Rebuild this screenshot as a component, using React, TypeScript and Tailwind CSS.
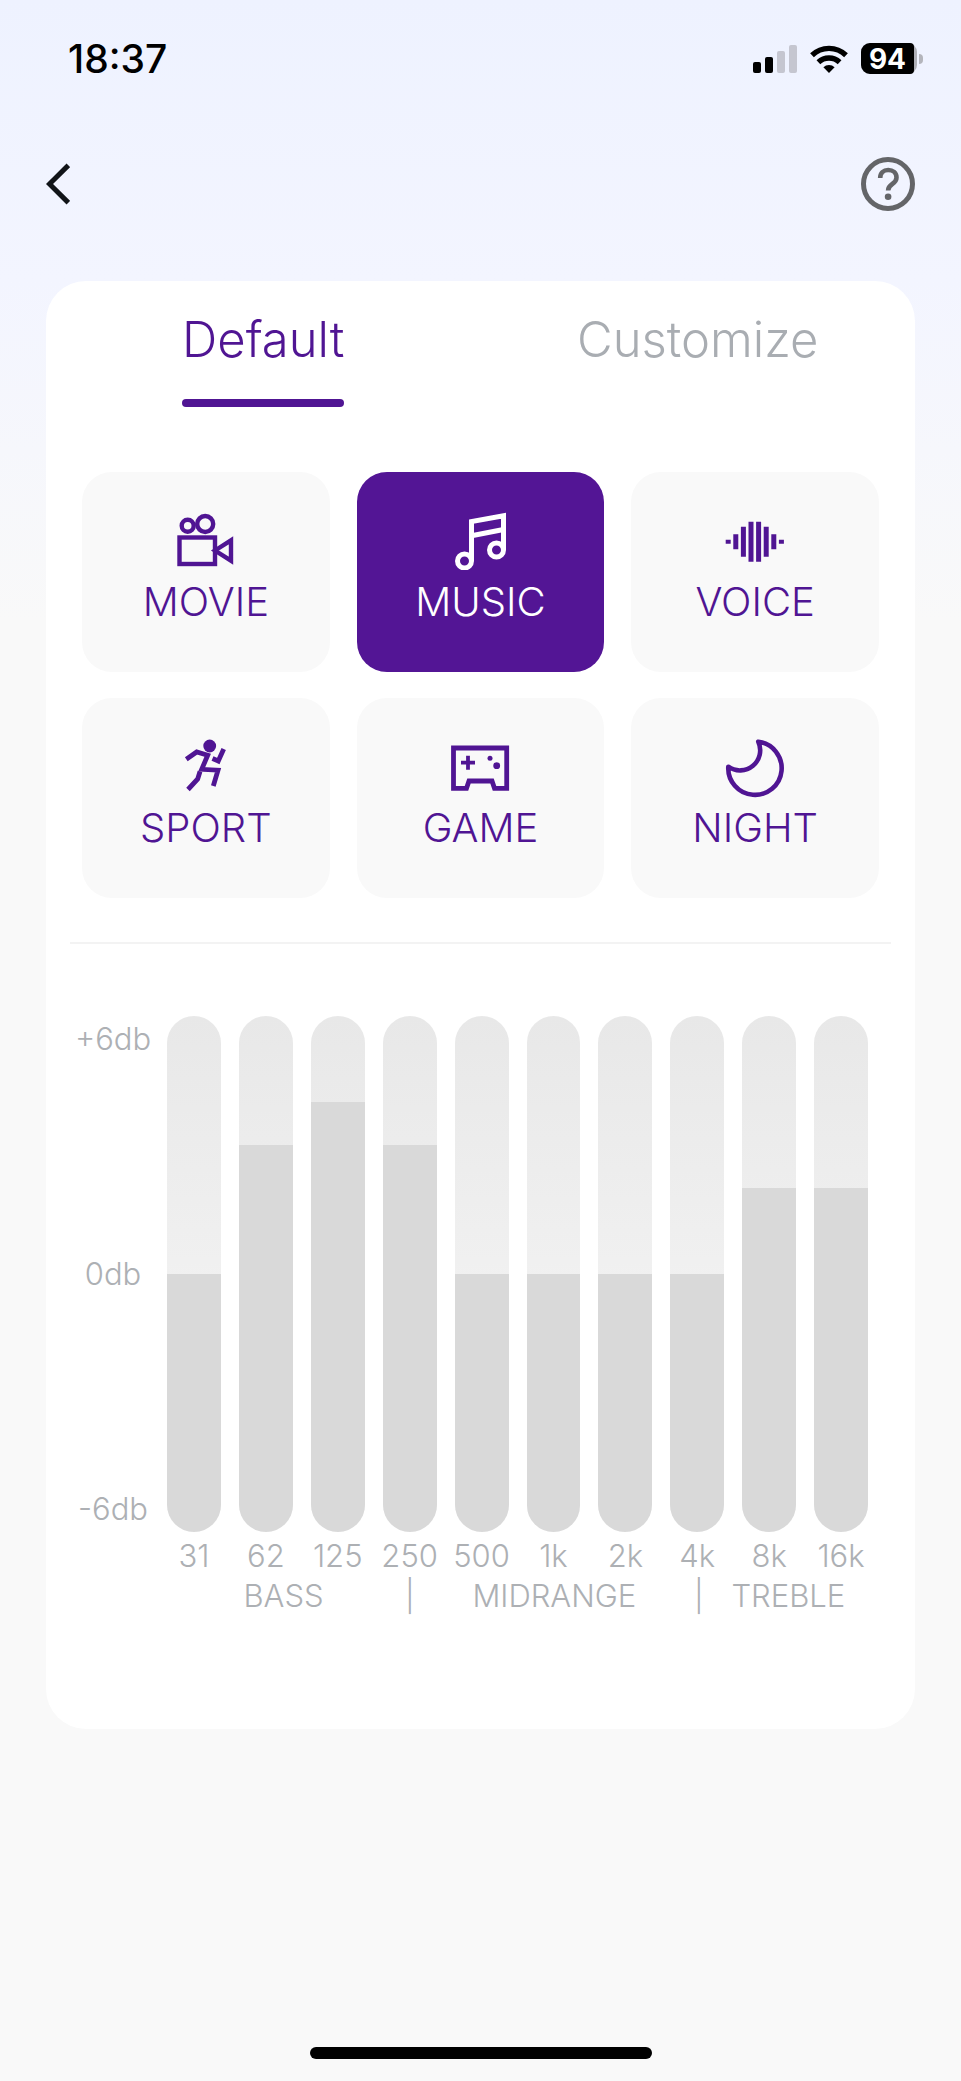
import { useState } from 'react';
import type { ReactNode } from 'react';

const BANDS = ['31', '62', '125', '250', '500', '1k', '2k', '4k', '8k', '16k'];

const MovieIcon = () => (
    <svg viewBox="0 0 60 60" className="w-[60px] h-[60px]" fill="none" stroke="currentColor" strokeWidth="4.4">
        <circle cx="11.7" cy="15.7" r="6" />
        <circle cx="29.2" cy="14" r="8" />
        <rect x="3.5" y="27.5" width="35.5" height="26.5" />
        <path d="M39 40.5 55 30.3v20.4z" />
    </svg>
);

const MusicIcon = () => (
    <svg viewBox="0 0 60 60" className="w-[60px] h-[60px]" fill="none" stroke="currentColor" strokeWidth="5">
        <circle cx="14.5" cy="51" r="7" />
        <circle cx="46.5" cy="40" r="7" />
        <path d="M21.5 51V11.5L53.5 5.7V40" />
        <path d="M21.5 25.7 53.5 19.5" />
    </svg>
);

const VoiceIcon = () => (
    <svg viewBox="0 0 60 60" className="w-[60px] h-[60px]" fill="none" stroke="currentColor" strokeWidth="5">
        <path d="M3.2 29.7v4M10.8 24.2v15M18.4 16.7v30M26 11.7v40M33.6 11.7v40M41.2 16.7v30M48.8 24.2v15M56.4 29.7v4" />
    </svg>
);

const SportIcon = () => (
    <svg viewBox="0 0 60 60" className="w-[60px] h-[60px]" fill="none" stroke="currentColor" strokeWidth="4.8">
        <circle cx="33.7" cy="10" r="6.4" fill="currentColor" stroke="none" />
        <path d="M10.3 23.3 20.7 16l11 3.3-6 14L42 34.2 37.3 50" />
        <path d="M24 35.5 21.7 43 12 53.5" />
        <path d="M36.5 22.5 42.3 25l5.4-12" />
    </svg>
);

const GameIcon = () => (
    <svg viewBox="0 0 60 60" className="w-[60px] h-[60px]" fill="none" stroke="currentColor" strokeWidth="4.8">
        <path d="M3.5 12H56.7V52.3H44.5L42 45H19L16.5 52.3H3.5z" />
        <path d="M18 19.7v14M11 26.7h14" strokeWidth="3.8" />
        <circle cx="40" cy="22.3" r="2.5" fill="currentColor" stroke="none" />
        <circle cx="46.7" cy="29.7" r="3.4" fill="currentColor" stroke="none" />
    </svg>
);

const NightIcon = () => (
    <svg viewBox="0 0 60 60" className="w-[60px] h-[60px] overflow-visible" fill="none" stroke="currentColor" strokeWidth="4.6" strokeLinejoin="round">
        <path d="M33.3 5.7A26.7 26.7 0 1 1 3.3 30.7 20.2 20.2 0 0 0 33.3 5.7z" />
    </svg>
);

const PRESETS: { name: string; icon: ReactNode; levels: number[] }[] = [
    { name: 'MOVIE', icon: <MovieIcon />, levels: [3, 3, 2, 0, 0, 1, 2, 2, 3, 3] },
    { name: 'MUSIC', icon: <MusicIcon />, levels: [0, 3, 4, 3, 0, 0, 0, 0, 2, 2] },
    { name: 'VOICE', icon: <VoiceIcon />, levels: [-3, -2, 0, 2, 3, 4, 3, 2, 0, -2] },
    { name: 'SPORT', icon: <SportIcon />, levels: [4, 4, 3, 1, 0, 0, 1, 2, 2, 2] },
    { name: 'GAME', icon: <GameIcon />, levels: [2, 3, 1, 0, 0, 2, 3, 3, 2, 1] },
    { name: 'NIGHT', icon: <NightIcon />, levels: [-4, -3, -2, 0, 1, 1, 0, 0, -1, -2] },
];

function StatusBar() {
    return (
        <div className="h-[117px] pl-[68px] pr-[38px] flex items-center justify-between text-black">
            <span className="text-[39px] leading-[48px] font-medium">18:37</span>
            <div className="flex items-center gap-[13px]">
                <svg viewBox="0 0 44 28" className="w-[44px] h-[28px]">
                    <rect x="0" y="17" width="8" height="11" rx="2" />
                    <rect x="12" y="12" width="8" height="16" rx="2" />
                    <rect x="24" y="6" width="8" height="22" rx="2" fill="#c5c6d0" />
                    <rect x="36" y="0" width="8" height="28" rx="2" fill="#c5c6d0" />
                </svg>
                <svg viewBox="0 0 38 28" className="w-[38px] h-[28px]" fill="none" stroke="currentColor" strokeWidth="5.4">
                    <path d="M2 10.2a24.500 24.500 0 0 1 34 0" />
                    <path d="M8.4 17.300a15.400 15.400 0 0 1 21.200 0" />
                    <path d="M19 28l-5.600-5.800a8 8 0 0 1 11.200 0z" fill="currentColor" stroke="none" />
                </svg>
                <div className="flex items-center gap-[2px]">
                    <div className="w-[56px] rounded-[9px] bg-[#aeafb6] pr-[3px]">
                        <div className="flex h-[31px] items-center justify-center rounded-l-[9px] rounded-r-[4px] bg-black text-white text-[28px] leading-[36px] font-bold">94</div>
                    </div>
                    <div className="w-1 h-[10px] rounded-r-full bg-[#b4b5bc]" />
                </div>
            </div>
        </div>
    );
}

export default function App() {
    const [tab, setTab] = useState('Default');
    const [active, setActive] = useState('MUSIC');

    const levels = PRESETS.find((preset) => preset.name === active)!.levels;

    return (
        <div className="min-h-screen flex flex-col bg-[#f9f9f9] bg-[linear-gradient(to_bottom,#eef2ff_0px,#f3f5ff_280px,#f9f9f9_620px)] font-['Inter','Liberation_Sans',sans-serif]">
            <StatusBar />

            <header className="h-[134px] px-[46px] flex items-center justify-between">
                <button aria-label="Back" className="w-[24px] h-[42px]">
                    <svg viewBox="0 0 24 42" className="w-[24px] h-[42px]" fill="none" stroke="#111418" strokeWidth="5">
                        <path d="M22.3 2.3 3.5 21l18.8 18.7" />
                    </svg>
                </button>
                <button aria-label="Help" className="w-[54px] h-[54px]">
                    <svg viewBox="0 0 54 54" className="w-[54px] h-[54px]" fill="none" stroke="#646568" strokeWidth="5">
                        <circle cx="27" cy="27" r="24.5" />
                        <path d="M19.2 21c0-5 3.300-8 8-8s8.300 3 8.300 7.500c0 3-1.500 4.700-4.200 6.500-2.900 2-4.200 3.200-4.200 6.500" strokeWidth="4.6" />
                        <circle cx="27.1" cy="39.7" r="3.3" fill="#646568" stroke="none" />
                    </svg>
                </button>
            </header>

            <main className="mx-[46px] mt-[30px] pt-[29px] pb-[113px] bg-white rounded-[40px]">
                <div role="tablist" className="grid grid-cols-2">
                    {['Default', 'Customize'].map((label) => (
                        <button
                            key={label}
                            role="tab"
                            aria-selected={tab === label}
                            onClick={() => setTab(label)}
                            className={`flex flex-col items-center text-[49px] leading-[60px] font-light ${tab === label ? 'text-[#501593]' : 'text-[#a9adb2]'}`}
                        >
                            {label}
                            <span className={`mt-[29px] w-[162px] h-2 rounded-full ${tab === label ? 'bg-[#501593]' : 'bg-transparent'}`} />
                        </button>
                    ))}
                </div>

                {/* Presets */}
                <div className="mt-[65px] px-9 grid grid-cols-3 gap-x-[27px] gap-y-[26px]">
                    {PRESETS.map((preset) => (
                        <button
                            key={preset.name}
                            aria-pressed={active === preset.name}
                            onClick={() => setActive(preset.name)}
                            className={`h-[200px] pt-[38px] rounded-[30px] flex flex-col items-center gap-2 ${active === preset.name
                                ? 'bg-[#531595] text-white'
                                : 'bg-[#f9f9f9] text-[#501593]'
                            }`}
                        >
                            {preset.icon}
                            <span className="text-[40px] leading-[48px] font-light">{preset.name}</span>
                        </button>
                    ))}
                </div>

                <hr className="mt-[44px] mx-6 border-t-2 border-[#f3f3f3]" />

                {/* Equalizer */}
                <section className="mt-[72px] pl-6 pr-[47px] flex gap-[11px] text-[#adb0b4] text-[31px] leading-[40px] font-light">
                    <div className="w-[86px] h-[516px] py-[3px] flex flex-col items-center justify-between shrink-0">
                        <span>+6db</span>
                        <span>0db</span>
                        <span>-6db</span>
                    </div>
                    <div className="flex-1 min-w-0">
                        <div className="grid grid-cols-10 gap-[18px]">
                            {BANDS.map((band, i) => (
                                <div key={band} className="flex flex-col items-center gap-1">
                                    <div
                                        role="meter"
                                        aria-label={band}
                                        aria-valuemin={-6}
                                        aria-valuemax={6}
                                        aria-valuenow={levels[i]}
                                        className="w-full h-[516px] rounded-full overflow-hidden flex flex-col justify-end bg-linear-to-b from-[#e8e8e8] to-[#f9f9f9]"
                                    >
                                        <div className="bg-[#d9d9d9]" style={{ height: `${((levels[i] + 6) / 12) * 100}%` }} />
                                    </div>
                                    <span>{band}</span>
                                </div>
                            ))}
                        </div>
                        <div className="grid grid-cols-[234fr_20fr_270fr_20fr_160fr] text-center">
                            <span>BASS</span>
                            <span>|</span>
                            <span>MIDRANGE</span>
                            <span>|</span>
                            <span>TREBLE</span>
                        </div>
                    </div>
                </section>
            </main>

            <div className="mt-auto mx-auto mb-[22px] w-[342px] h-3 rounded-full bg-black" />
        </div>
    );
}
